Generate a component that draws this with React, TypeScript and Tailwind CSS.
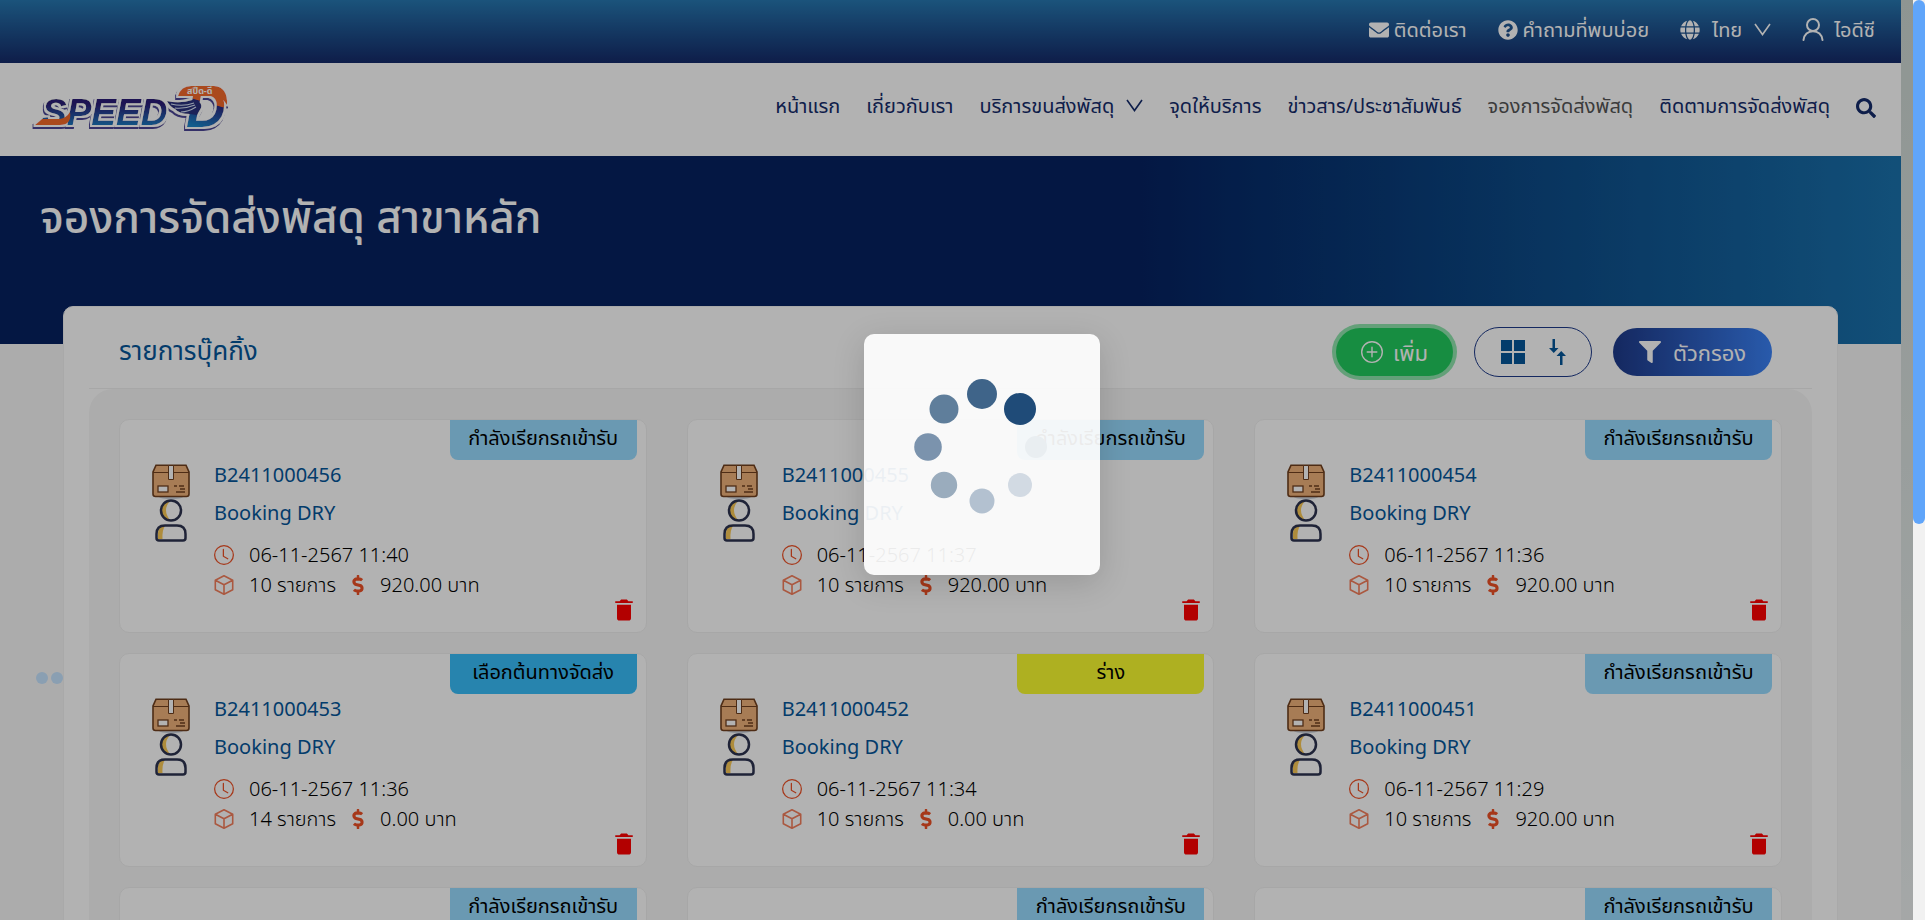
import { BsClock, BsPlusCircle } from "react-icons/bs";
import { FaDollarSign, FaEnvelope, FaFilter, FaGlobe, FaQuestionCircle, FaSearch } from "react-icons/fa";
import { IoMdTrash } from "react-icons/io";

type Status = "pickup" | "origin" | "draft";

interface Booking {
  id: string;
  status: Status;
  time: string;
  items: number;
  price: string;
}

const STATUS: Record<Status, { label: string; className: string }> = {
  pickup: { label: "กำลังเรียกรถเข้ารับ", className: "bg-[#99dcff]" },
  origin: { label: "เลือกต้นทางจัดส่ง", className: "bg-[#39bef9]" },
  draft: { label: "ร่าง", className: "bg-[#fafd30]" },
};

const BOOKINGS: Booking[] = [
  { id: "B2411000456", status: "pickup", time: "06-11-2567 11:40", items: 10, price: "920.00" },
  { id: "B2411000455", status: "pickup", time: "06-11-2567 11:37", items: 10, price: "920.00" },
  { id: "B2411000454", status: "pickup", time: "06-11-2567 11:36", items: 10, price: "920.00" },
  { id: "B2411000453", status: "origin", time: "06-11-2567 11:36", items: 14, price: "0.00" },
  { id: "B2411000452", status: "draft", time: "06-11-2567 11:34", items: 10, price: "0.00" },
  { id: "B2411000451", status: "pickup", time: "06-11-2567 11:29", items: 10, price: "920.00" },
  { id: "B2411000450", status: "pickup", time: "06-11-2567 11:25", items: 10, price: "920.00" },
  { id: "B2411000449", status: "pickup", time: "06-11-2567 11:21", items: 10, price: "920.00" },
  { id: "B2411000448", status: "pickup", time: "06-11-2567 11:18", items: 10, price: "920.00" },
];

function Chevron() {
  return (
    <svg viewBox="0 0 17 13" className="h-[13px] w-[17px]" fill="none" stroke="currentColor" strokeWidth="1.6" aria-hidden="true">
      <path d="M1 1 L8.500 11.500 L16 1" />
    </svg>
  );
}

function UserIcon() {
  return (
    <svg viewBox="0 0 22 23" className="h-[23px] w-[22px]" fill="none" stroke="currentColor" strokeWidth="2" strokeLinecap="round" aria-hidden="true">
      <circle cx="11" cy="7" r="6" />
      <path d="M1.500 22 C2 16.500 6 13.200 11 13.200 C16 13.200 20 16.500 20.500 22" />
    </svg>
  );
}

function Logo() {
  return (
    <svg viewBox="0 0 220 70" className="h-[70px] w-[220px]" role="img" aria-label="Speed-D">
      <defs>
        <linearGradient id="wordFill" x1="0" y1="0" x2="0" y2="1">
          <stop offset="0.3" stopColor="#2c1f78" />
          <stop offset="0.85" stopColor="#1d7fc4" />
        </linearGradient>
        <linearGradient id="letterFill" gradientUnits="userSpaceOnUse" x1="197" y1="16" x2="185" y2="58">
          <stop offset="0.4" stopColor="#f4692b" />
          <stop offset="0.42" stopColor="#2c2a84" />
          <stop offset="1" stopColor="#1d86c9" />
        </linearGradient>
        <filter id="outline" x="-5%" y="-10%" width="110%" height="125%">
          <feMorphology in="SourceAlpha" operator="dilate" radius="2" result="inner" />
          <feFlood floodColor="#ffffff" />
          <feComposite in2="inner" operator="in" result="halo" />
          <feOffset in="inner" dx="-1" dy="2" result="moved" />
          <feFlood floodColor="#4b4596" />
          <feComposite in2="moved" operator="in" result="edge" />
          <feMerge>
            <feMergeNode in="edge" />
            <feMergeNode in="halo" />
            <feMergeNode in="SourceGraphic" />
          </feMerge>
        </filter>
      </defs>
      <g filter="url(#outline)" fontFamily="Liberation Sans, Arial, sans-serif" fontStyle="italic" fontWeight="700">
        <text x="22" y="54" fontSize="37" fill="url(#wordFill)">SPEED</text>
        <path d="M15 54 L22 48 H40 Q46 47 50 41 Q52 54 40 54 Z" fill="#f4692b" />
        <text x="166" y="56" fontSize="55" fill="url(#letterFill)">D</text>
        <path d="M158 25 Q161 15 171 15 H194 Q208 16 207 34 Q202 25 192 25 Z" fill="#f4692b" />
        <path d="M147 30 Q160 33 172 29 Q183 30 181 37 L177 44 L170 43 Q159 43 155 38 Q150 36 147 30 Z" fill="#29317f" />
      </g>
      <path d="M151 33 Q163 36 174 32 M155 37 Q165 38 175 34 M161 41 Q168 41 176 36" fill="none" stroke="#d8e4f5" strokeWidth="1.1" />
      <text x="167" y="23" fontSize="9" fontWeight="700" fill="#fff" fontFamily="Noto Sans Thai, sans-serif">สปีด-ดี</text>
    </svg>
  );
}

function ParcelIcon() {
  return (
    <svg viewBox="0 0 38 35" className="h-[35px] w-[38px]" aria-hidden="true">
      <ellipse cx="19" cy="33" rx="12" ry="2" fill="#cdd5e0" />
      <path d="M4 1.200 H34 L37 8 V30 Q37 32.500 34.500 32.500 H3.500 Q1 32.500 1 30 V8 Z" fill="#f0b27a" stroke="#70401f" strokeWidth="1.6" />
      <path d="M1 8.500 H37" stroke="#70401f" strokeWidth="1.2" />
      <path d="M16.500 1.500 H21.500 V15.500 H16.500 Z" fill="#fff" stroke="#70401f" strokeWidth="1" />
      <rect x="6" y="22" width="10" height="6" fill="#fff" stroke="#70401f" strokeWidth="1.3" />
      <path d="M22 22 H25 M27 22 H32 M28 25 H33 M24 28 H33" stroke="#70401f" strokeWidth="1.5" />
    </svg>
  );
}

function PersonIcon() {
  return (
    <svg viewBox="0 0 32 43" className="h-[43px] w-8" aria-hidden="true">
      <path d="M15 2 A9.500 9.500 0 0 0 15 21 Q7 11 15 2 Z" fill="#f9c957" />
      <circle cx="16" cy="11.500" r="10" fill="none" stroke="#2d3350" strokeWidth="2.500" />
      <path d="M3 40 V34 Q3 27 10 27 Q7 31 7.500 40 Z" fill="#f9c957" />
      <path d="M1.500 35 Q1.500 26.500 10 26.500 H22 Q30.500 26.500 30.500 35 V39 Q30.500 41.500 28 41.500 H4 Q1.500 41.500 1.500 39 Z" fill="none" stroke="#2d3350" strokeWidth="2.500" />
    </svg>
  );
}

function CubeIcon() {
  return (
    <svg viewBox="0 0 20 20" className="size-5" fill="none" stroke="#f47f5c" strokeWidth="1.600" strokeLinejoin="round" aria-hidden="true">
      <path d="M10 0.800 L18.700 5.200 V14.800 L10 19.200 L1.300 14.800 V5.200 Z M1.300 5.200 L10 9.800 L18.700 5.200 M10 9.800 V19.200" />
    </svg>
  );
}

function GridIcon() {
  return (
    <svg viewBox="0 0 24 24" className="size-6" fill="#05569a" aria-hidden="true">
      <path d="M0 0 H11 V11 H0 Z M13 0 H24 V11 H13 Z M0 13 H11 V24 H0 Z M13 13 H24 V24 H13 Z" />
    </svg>
  );
}

function SortIcon() {
  return (
    <svg viewBox="0 0 17 26" className="h-[26px] w-[17px]" fill="#05569a" aria-hidden="true">
      <path d="M3.500 0 H6 V9 H9.500 L4.750 14 L0 9 H3.500 Z M11 26 H13.500 V17 H17 L12.250 12 L7.500 17 H11 Z" />
    </svg>
  );
}

function Spinner() {
  const dots = [
    { x: 80, y: 27, r: 15, fill: "#3f6489" },
    { x: 118, y: 42, r: 16, fill: "#1f4b78" },
    { x: 134, y: 80, r: 11, fill: "#e9eef1" },
    { x: 118, y: 118, r: 12, fill: "#d2dae3" },
    { x: 80, y: 134, r: 12.5, fill: "#b3c1d0" },
    { x: 42, y: 118, r: 13.2, fill: "#9aacbd" },
    { x: 26, y: 80, r: 13.8, fill: "#7b93ad" },
    { x: 42, y: 42, r: 14.5, fill: "#5f7e9b" },
  ];
  return (
    <svg viewBox="0 0 160 160" className="size-40" aria-hidden="true">
      {dots.map((d) => (
        <circle key={d.fill} cx={d.x} cy={d.y} r={d.r} fill={d.fill} />
      ))}
    </svg>
  );
}

function TopBar() {
  return (
    <div className="flex h-[63px] items-center justify-end gap-[31px] bg-linear-to-b from-[#2778b1] to-[#152a69] px-[26px] pb-1 text-xl leading-7 text-white">
      <a href="#contact" className="flex items-center gap-[5px]">
        <FaEnvelope className="size-5" />
        ติดต่อเรา
      </a>
      <a href="#faq" className="flex items-center gap-[5px]">
        <FaQuestionCircle className="size-5" />
        คำถามที่พบบ่อย
      </a>
      <button type="button" className="flex items-center gap-3">
        <FaGlobe className="size-5" />
        ไทย
        <Chevron />
      </button>
      <a href="#account" className="flex items-center gap-[10px]">
        <UserIcon />
        ไอดีซี
      </a>
    </div>
  );
}

function Header() {
  return (
    <header className="flex h-[93px] items-center justify-between bg-white pr-[25px] pb-2 pl-5">
      <a href="#home">
        <Logo />
      </a>
      <nav className="flex items-center gap-[26px] text-xl leading-7 text-[#152c6b]">
        <a href="#home">หน้าแรก</a>
        <a href="#about">เกี่ยวกับเรา</a>
        <button type="button" className="flex items-center gap-3">
          บริการขนส่งพัสดุ
          <Chevron />
        </button>
        <a href="#points">จุดให้บริการ</a>
        <a href="#news">ข่าวสาร/ประชาสัมพันธ์</a>
        <a href="#booking" className="text-[#555555]">จองการจัดส่งพัสดุ</a>
        <a href="#tracking">ติดตามการจัดส่งพัสดุ</a>
        <button type="button" aria-label="ค้นหา" className="pt-1">
          <FaSearch className="size-5" />
        </button>
      </nav>
    </header>
  );
}

function BookingCard({ booking }: { booking: Booking }) {
  const status = STATUS[booking.status];
  return (
    <article className="relative flex min-h-[214px] gap-6 rounded-[10px] border border-[#f0f0f0] bg-white pl-8">
      <div className="flex flex-col items-center pt-11">
        <ParcelIcon />
        <PersonIcon />
      </div>
      <div className="pt-10 text-xl leading-[30px]">
        <h3 className="pb-2 text-[#05569a]">{booking.id}</h3>
        <p className="pb-3 text-[#05569a]">Booking DRY</p>
        <p className="flex items-center gap-[15px] font-light">
          <BsClock className="size-5 text-[#ee5126]" />
          {booking.time}
        </p>
        <p className="flex items-center font-light">
          <CubeIcon />
          <span className="pr-3 pl-[15px]">{booking.items} รายการ</span>
          <FaDollarSign className="size-5 text-[#ee5126]" />
          <span className="pl-3">{booking.price} บาท</span>
        </p>
      </div>
      <span className={`absolute top-0 right-[9px] flex h-10 w-[187px] items-center justify-center rounded-b-lg pb-1 text-xl leading-7 ${status.className}`}>
        {status.label}
      </span>
      <button type="button" aria-label={`ลบ ${booking.id}`} className="absolute right-2 bottom-2 text-[#ff0000]">
        <IoMdTrash className="size-7" />
      </button>
    </article>
  );
}

export default function App() {
  return (
    <div className="relative flex h-screen overflow-hidden bg-[#f7f7f7] font-['Noto_Sans','Noto_Sans_Thai',sans-serif] text-black">
      <div className="min-w-0 flex-1">
        <TopBar />
        <Header />
        <section className="h-[188px] bg-linear-to-r from-[#062261] from-60% to-[#1a72ad] px-10 pt-7">
          <h1 className="text-[44px] leading-[64px] font-medium text-white">จองการจัดส่งพัสดุ สาขาหลัก</h1>
        </section>
        <main className="relative mx-[63px] -mt-[38px] rounded-[10px] border border-[#f2f2f2] bg-white px-[25px]">
          <div className="flex h-[82px] items-center justify-between border-b border-[#f0f0f0] pr-[40px] pb-2 pl-[30px]">
            <h2 className="pt-3 text-[26px] leading-8 text-[#05569a]">รายการบุ๊คกิ้ง</h2>
            <div className="flex items-center gap-[21px] pt-4 text-[22px] leading-7">
              <button type="button" className="flex h-12 w-[117px] items-center justify-center gap-[10px] rounded-full bg-[#22cb5e] text-white ring-4 ring-[#22cb5e]/50">
                <BsPlusCircle className="size-[22px]" />
                เพิ่ม
              </button>
              <div className="flex h-[50px] w-[118px] items-center justify-center gap-6 rounded-full border border-[#1e3a8a]">
                <button type="button" aria-label="มุมมองตาราง">
                  <GridIcon />
                </button>
                <button type="button" aria-label="เรียงลำดับ">
                  <SortIcon />
                </button>
              </div>
              <button type="button" className="flex h-12 w-[159px] items-center justify-center gap-3 rounded-full bg-linear-to-r from-[#1e3a8a] to-[#3b82f6] text-white">
                <FaFilter className="size-[22px]" />
                ตัวกรอง
              </button>
            </div>
          </div>
          <div className="grid grid-cols-3 gap-x-10 gap-y-5 rounded-t-3xl bg-[#f7f7f7] px-[30px] pt-[30px] pb-8">
            {BOOKINGS.map((booking) => (
              <BookingCard key={booking.id} booking={booking} />
            ))}
          </div>
        </main>
      </div>
      <div className="w-3 shrink-0 bg-linear-to-b from-[#ccd6d2] to-[#ecf0f0]" />
      <div className="w-3 shrink-0 bg-[#f1f1f1]">
        <div className="h-[57%] rounded-full bg-[#60a5fa]" />
      </div>
      <div className="absolute top-[672px] left-9 flex gap-[3px]">
        <span className="size-3 rounded-full bg-[#c6e4ff]" />
        <span className="size-3 rounded-full bg-[#c6e4ff]" />
      </div>
      <div className="absolute inset-y-0 right-3 left-0 flex items-center justify-center bg-black/30 pb-[11px] pl-[51px]">
        <div role="status" aria-label="กำลังโหลด" className="rounded-[10px] bg-white/92 px-[38px] pt-[33px] pb-12 shadow-[0_8px_32px_rgba(0,0,0,0.15)]">
          <Spinner />
        </div>
      </div>
    </div>
  );
}
